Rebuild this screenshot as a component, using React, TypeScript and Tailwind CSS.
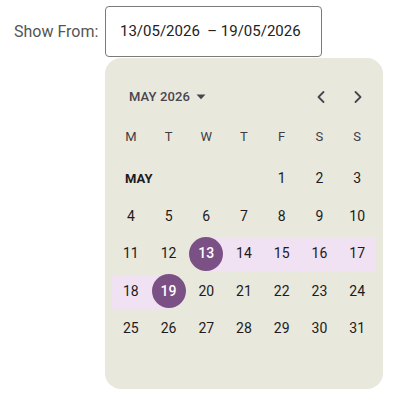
import { ChevronLeft, ChevronRight } from "lucide-react";

type Cell = { d?: number; label?: string };

const rows: Cell[][] = [
  [{ label: "MAY" }, {}, {}, {}, { d: 1 }, { d: 2 }, { d: 3 }],
  [4, 5, 6, 7, 8, 9, 10].map((d) => ({ d })),
  [11, 12, 13, 14, 15, 16, 17].map((d) => ({ d })),
  [18, 19, 20, 21, 22, 23, 24].map((d) => ({ d })),
  [25, 26, 27, 28, 29, 30, 31].map((d) => ({ d })),
];

const START = 13;
const END = 19;

function DayCell({ cell }: { cell: Cell }) {
  const d = cell.d;
  if (cell.label) {
    return (
      <div className="h-[37.5px] flex items-center pl-[13px] text-[13px] font-bold text-[#1d1b20]">
        {cell.label}
      </div>
    );
  }
  if (!d) return <div className="h-[37.5px]" />;

  const selected = d === START || d === END;
  const inRange = d > START && d < END;

  return (
    <div className="relative h-[37.5px] flex items-center justify-center">
      {inRange && <div className="absolute inset-x-0 top-[2px] h-[34px] bg-[#f0e2f2]" />}
      {d === START && <div className="absolute right-0 left-1/2 top-[2px] h-[34px] bg-[#f0e2f2]" />}
      {d === END && <div className="absolute left-0 right-1/2 top-[2px] h-[34px] bg-[#f0e2f2]" />}
      {selected ? (
        <div className="relative w-[34px] h-[34px] rounded-full bg-[#7b5084] text-white text-[14px] font-medium flex items-center justify-center">
          {d}
        </div>
      ) : (
        <span className="relative text-[14px] text-[#1d1b20]">{d}</span>
      )}
    </div>
  );
}

export default function App() {
  return (
    <div className="min-h-screen bg-white font-['Roboto',sans-serif] pl-[14px] pt-[6px]">
      <div className="flex items-start">
        <div className="h-[51px] flex items-center text-[16px] text-[#555] w-[91px]">Show From:</div>
        <div className="flex flex-col">
          <div className="w-[217px] h-[51px] border border-[#7a7a7a] rounded-[4px] flex items-center pl-[14px] text-[15px] text-[#222] whitespace-pre">
            13/05/2026  – 19/05/2026
          </div>
          <div className="mt-[1px] w-[278px] h-[331px] rounded-[16px] bg-[#e8e8dd] pt-[21px] px-[7px]">
            <div className="h-[36px] flex items-center">
              <div className="flex items-center pl-[17px] text-[13px] font-medium text-[#49454f] tracking-[0.1px]">
                MAY 2026
                <svg width="10" height="6" viewBox="0 0 10 6" className="ml-[6px]">
                  <path d="M0.5 0.5 L9.5 0.5 L5 5.2 Z" fill="#49454f" />
                </svg>
              </div>
              <div className="ml-auto flex items-center">
                <div className="w-[37px] h-[36px] flex items-center justify-center text-[#49454f]">
                  <ChevronLeft size={20} strokeWidth={2.2} />
                </div>
                <div className="w-[37px] h-[36px] flex items-center justify-center text-[#49454f]">
                  <ChevronRight size={20} strokeWidth={2.2} />
                </div>
              </div>
            </div>
            <div className="mt-[2px] grid grid-cols-7 h-[40px] items-center text-[13px] text-[#3f3c44]">
              {["M", "T", "W", "T", "F", "S", "S"].map((w, i) => (
                <div key={i} className="text-center">
                  {w}
                </div>
              ))}
            </div>
            <div className="mt-[3px] grid grid-cols-7">
              {rows.flat().map((c, i) => (
                <DayCell key={i} cell={c} />
              ))}
            </div>
          </div>
        </div>
      </div>
    </div>
  );
}
